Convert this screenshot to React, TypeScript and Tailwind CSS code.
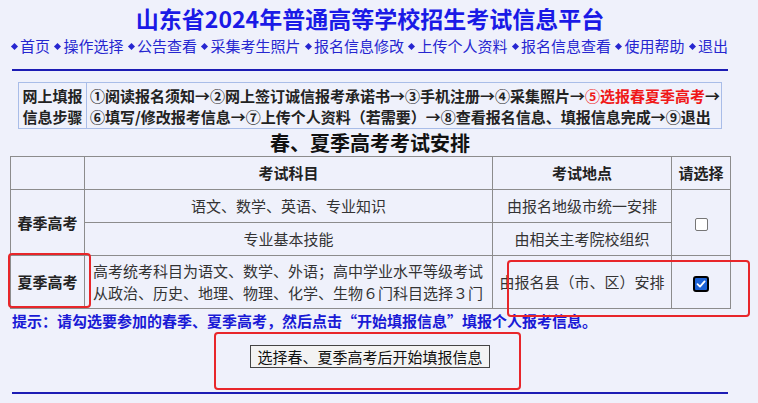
import React from "react";

const font = { fontFamily: '"Noto Sans CJK SC", "Noto Sans", sans-serif' };

function Diamond() {
  return <span className="inline-block w-[5px] h-[5px] rotate-45 bg-current mr-[3px] mb-[3px] align-middle" />;
}

const navItems = ["首页", "操作选择", "公告查看", "采集考生照片", "报名信息修改", "上传个人资料", "报名信息查看", "使用帮助", "退出"];

function CheckedBox() {
  return (
    <span className="inline-flex w-[16px] h-[16px] rounded-[3px] border-2 border-black bg-[#1c62d6] items-center justify-center">
      <svg width="10" height="10" viewBox="0 0 10 10">
        <path d="M1.5 5.2 L4 7.6 L8.6 2.4" fill="none" stroke="white" strokeWidth="1.8" strokeLinecap="round" strokeLinejoin="round" />
      </svg>
    </span>
  );
}

export default function App() {
  const td = "border border-[#8c8c8c] text-center";
  return (
    <div className="relative w-[758px] h-[403px] bg-[#eff1fb] overflow-hidden text-[#222]" style={font}>
      <div className="w-[720px] ml-[10px]">
        <div className="h-[36px] flex items-center justify-center text-[23px] font-bold text-[#1a1ae6] leading-none pt-[1px]">
          山东省2024年普通高等学校招生考试信息平台
        </div>
        <div className="h-[20px] mx-[2px] flex justify-between items-center text-[15px] leading-[20px] text-[#2626d0]">
          {navItems.map((n) => (
            <span key={n} className="whitespace-nowrap">
              <Diamond />
              {n}
            </span>
          ))}
        </div>
        <div className="mt-[13px] mx-[2px] h-[2px] bg-[#1c1cb4]" />
        <div className="mt-[11px] ml-[8px] w-[704px] h-[47px] border border-[#a9bde8] flex text-[15px] font-bold leading-[21px]">
          <div className="w-[68px] border-r border-[#a9bde8] flex flex-col justify-center items-center">
            <div>网上填报</div>
            <div>信息步骤</div>
          </div>
          <div className="flex flex-col justify-center pl-[3px] whitespace-nowrap">
            <div>
              ①阅读报名须知→②网上签订诚信报考承诺书→③手机注册→④采集照片→<span className="text-[#f01818]">⑤选报春夏季高考</span>→
            </div>
            <div>⑥填写/修改报考信息→⑦上传个人资料（若需要）→⑧查看报名信息、填报信息完成→⑨退出</div>
          </div>
        </div>
        <div className="h-[27px] flex items-center justify-center text-[20px] font-bold text-[#111] leading-none pt-[1px]">
          春、夏季高考考试安排
        </div>
        <table className="w-[720px] border-collapse text-[15px] leading-[22px] table-fixed">
          <colgroup>
            <col className="w-[74px]" />
            <col className="w-[408px]" />
            <col className="w-[179px]" />
            <col className="w-[59px]" />
          </colgroup>
          <tbody>
            <tr className="h-[33px] font-bold">
              <td className={td}></td>
              <td className={td}>考试科目</td>
              <td className={td}>考试地点</td>
              <td className={td}>请选择</td>
            </tr>
            <tr className="h-[33px] text-[#333]">
              <td className={`${td} font-bold text-[#222]`} rowSpan={2}>
                春季高考
              </td>
              <td className={td}>语文、数学、英语、专业知识</td>
              <td className={td}>由报名地级市统一安排</td>
              <td className={td} rowSpan={2}>
                <span className="inline-block w-[13px] h-[13px] rounded-[2px] border border-[#767676] bg-white align-middle" />
              </td>
            </tr>
            <tr className="h-[33px] text-[#333]">
              <td className={td}>专业基本技能</td>
              <td className={td}>由相关主考院校组织</td>
            </tr>
            <tr className="h-[53px] text-[#333]">
              <td className={`${td} font-bold text-[#222]`}>夏季高考</td>
              <td className="border border-[#8c8c8c] text-left pl-[8px] whitespace-nowrap">
                <div>高考统考科目为语文、数学、外语；高中学业水平等级考试</div>
                <div>从政治、历史、地理、物理、化学、生物６门科目选择３门</div>
              </td>
              <td className={td}>由报名县（市、区）安排</td>
              <td className={td}>
                <span className="inline-flex align-middle">
                  <CheckedBox />
                </span>
              </td>
            </tr>
          </tbody>
        </table>
        <div className="h-[24px] flex items-center ml-[2px] text-[15px] font-bold text-[#1a1ad6] whitespace-nowrap">
          提示：请勾选要参加的春季、夏季高考，然后点击“开始填报信息”填报个人报考信息。
        </div>
        <div className="h-[59px] flex items-start justify-center pt-[12px]">
          <button className="h-[23px] px-[6px] border border-[#444] bg-[#f3f3f3] text-[15px] leading-[21px] text-[#111]">
            选择春、夏季高考后开始填报信息
          </button>
        </div>
        <div className="mx-[2px] h-[1.5px] bg-[#1c1cb4]" />
      </div>
      {/* red annotation boxes */}
      <div className="absolute left-[8px] top-[253px] w-[83px] h-[55px] border-[2.5px] border-[#e8262a] rounded-[4px]" />
      <div className="absolute left-[507px] top-[260px] w-[243px] h-[57px] border-[2.5px] border-[#e8262a] rounded-[4px]" />
      <div className="absolute left-[214px] top-[332px] w-[307px] h-[58px] border-[2.5px] border-[#e8262a] rounded-[4px]" />
    </div>
  );
}
